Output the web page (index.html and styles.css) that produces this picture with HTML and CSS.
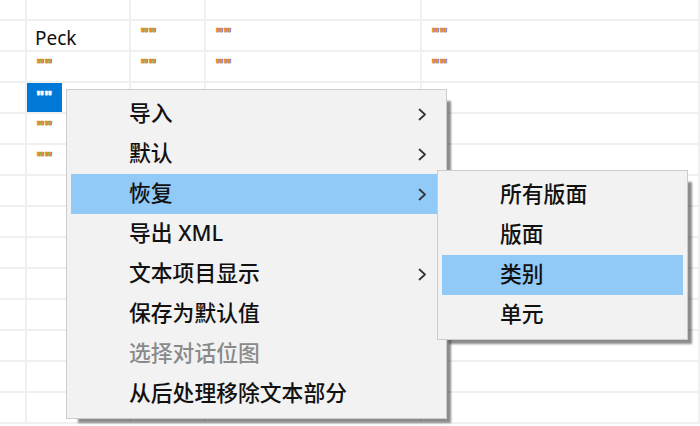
FILE: index.html
```html
<!DOCTYPE html>
<html lang="zh-CN">
<head>
<meta charset="utf-8">
<title>Context menu</title>
<link rel="stylesheet" href="styles.css">
</head>
<body>
<div class="sheet">
  <div class="cell"></div><div class="cell"></div><div class="cell"></div><div class="cell"></div><div class="cell"></div>

  <div class="cell"></div><div class="cell"><span class="word">Peck</span></div><div class="cell"><span class="q">""</span></div><div class="cell"><span class="q">""</span></div><div class="cell"><span class="q">""</span></div>

  <div class="cell"></div><div class="cell"><span class="q">""</span></div><div class="cell"><span class="q">""</span></div><div class="cell"><span class="q">""</span></div><div class="cell"><span class="q">""</span></div>

  <div class="cell"></div><div class="cell cell-sel"><span class="sel"><span class="q q-inv">""</span></span></div><div class="cell"></div><div class="cell"></div><div class="cell"></div>

  <div class="cell"></div><div class="cell"><span class="q">""</span></div><div class="cell"></div><div class="cell"></div><div class="cell"></div>

  <div class="cell"></div><div class="cell"><span class="q">""</span></div><div class="cell"></div><div class="cell"></div><div class="cell"></div>

  <div class="cell"></div><div class="cell"></div><div class="cell"></div><div class="cell"></div><div class="cell"></div>
  <div class="cell"></div><div class="cell"></div><div class="cell"></div><div class="cell"></div><div class="cell"></div>
  <div class="cell"></div><div class="cell"></div><div class="cell"></div><div class="cell"></div><div class="cell"></div>
  <div class="cell"></div><div class="cell"></div><div class="cell"></div><div class="cell"></div><div class="cell"></div>
  <div class="cell"></div><div class="cell"></div><div class="cell"></div><div class="cell"></div><div class="cell"></div>
  <div class="cell"></div><div class="cell"></div><div class="cell"></div><div class="cell"></div><div class="cell"></div>
  <div class="cell"></div><div class="cell"></div><div class="cell"></div><div class="cell"></div><div class="cell"></div>
  <div class="cell"></div><div class="cell"></div><div class="cell"></div><div class="cell"></div><div class="cell"></div>
</div>

<div class="menu menu-main">
  <div class="item"><span class="label">导入</span><svg class="chev" viewBox="0 0 9 13" width="9" height="13"><path d="M1.5 1.5 L7 6.5 L1.5 11.5"/></svg></div>
  <div class="item"><span class="label">默认</span><svg class="chev" viewBox="0 0 9 13" width="9" height="13"><path d="M1.5 1.5 L7 6.5 L1.5 11.5"/></svg></div>
  <div class="item item-hot"><span class="label">恢复</span><svg class="chev" viewBox="0 0 9 13" width="9" height="13"><path d="M1.5 1.5 L7 6.5 L1.5 11.5"/></svg></div>
  <div class="item"><span class="label">导出 XML</span></div>
  <div class="item"><span class="label">文本项目显示</span><svg class="chev" viewBox="0 0 9 13" width="9" height="13"><path d="M1.5 1.5 L7 6.5 L1.5 11.5"/></svg></div>
  <div class="item"><span class="label">保存为默认值</span></div>
  <div class="item item-off"><span class="label">选择对话位图</span></div>
  <div class="item"><span class="label">从后处理移除文本部分</span></div>
</div>

<div class="menu menu-sub">
  <div class="item"><span class="label">所有版面</span></div>
  <div class="item"><span class="label">版面</span></div>
  <div class="item item-hot"><span class="label">类别</span></div>
  <div class="item"><span class="label">单元</span></div>
</div>
</body>
</html>
```

FILE: styles.css
```css
html, body {
  margin: 0;
  padding: 0;
  background: #ffffff;
}

body {
  position: relative;
  width: 700px;
  height: 426px;
  overflow: hidden;
  font-family: "Noto Sans", "Liberation Sans", sans-serif;
}

.sheet {
  display: grid;
  grid-template-columns: 27px 104px 75px 216px 278px;
  grid-template-rows: 21px repeat(13, 31px);
}

.cell {
  box-sizing: border-box;
  border-right: 2px solid #f0f0f0;
  border-bottom: 2px solid #f0f0f0;
  padding: 6px 0 0 9px;
  overflow: hidden;
}

.cell-sel {
  padding: 0;
}

.sel {
  display: block;
  box-sizing: border-box;
  width: 35px;
  height: 29px;
  padding: 7px 0 0 9px;
  background: #0078d7;
}

.q {
  display: block;
  font-family: "Liberation Sans", sans-serif;
  font-weight: bold;
  font-size: 17px;
  line-height: 16px;
  color: #ee9222;
  text-shadow: 1px 0 0 rgba(30, 95, 200, 0.9);
  -webkit-text-stroke: 0.4px #d98a2a;
}

.q-inv {
  color: #ffffff;
  text-shadow: 1px 0 0 rgba(170, 210, 245, 0.9);
  -webkit-text-stroke: 0.4px #ffffff;
}

.word {
  display: block;
  margin: 3px 0 0 -1px;
  font-family: "Noto Sans", sans-serif;
  font-size: 19px;
  line-height: 16px;
  color: #111111;
}

.menu {
  position: absolute;
  box-sizing: border-box;
  padding: 4px;
  border: 1px solid #cccccc;
  background: #f2f2f2;
  box-shadow: 8px 8px 2px -4px rgba(0, 0, 0, 0.45);
  font-family: "Noto Sans", "Noto Sans CJK SC", sans-serif;
  font-size: 21.8px;
  font-weight: 500;
  color: #111111;
}

.menu-main {
  left: 66px;
  top: 89px;
  width: 381px;
  height: 330px;
}

.menu-sub {
  left: 437px;
  top: 170px;
  width: 251px;
  height: 170px;
}

.item {
  box-sizing: border-box;
  display: flex;
  align-items: center;
  justify-content: space-between;
  height: 40px;
  padding: 0 15px 2px 58px;
  line-height: 30px;
}

.label {
  white-space: nowrap;
}

.item-hot {
  background: #91c9f7;
}

.item-off {
  color: #8a8a8a;
}

.chev {
  flex: none;
  position: relative;
  top: 1px;
  fill: none;
  stroke: #333333;
  stroke-width: 1.7;
  stroke-linecap: round;
  stroke-linejoin: round;
}
```
